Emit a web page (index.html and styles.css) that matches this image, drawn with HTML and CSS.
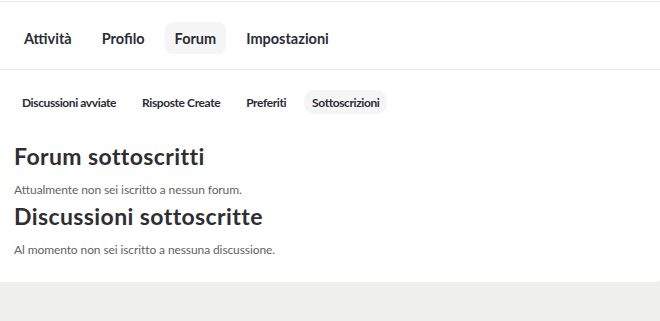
FILE: index.html
```html
<!DOCTYPE html>
<html lang="it">
  <head>
    <meta charset="utf-8">
    <link rel="stylesheet" href="styles.css">
    <title>Sottoscrizioni</title>
  </head>
  <body>
    <div class="card">
      <nav class="main-nav">
        <a href="#" class="nav-item">Attività</a>
        <a href="#" class="nav-item">Profilo</a>
        <a href="#" class="nav-item current">Forum</a>
        <a href="#" class="nav-item">Impostazioni</a>
      </nav>
      <nav class="sub-nav">
        <a href="#" class="sub-item">Discussioni avviate</a>
        <a href="#" class="sub-item">Risposte Create</a>
        <a href="#" class="sub-item">Preferiti</a>
        <a href="#" class="sub-item current">Sottoscrizioni</a>
      </nav>
      <div class="content">
        <h2>Forum sottoscritti</h2>
        <p>Attualmente non sei iscritto a nessun forum.</p>
        <h2>Discussioni sottoscritte</h2>
        <p>Al momento non sei iscritto a nessuna discussione.</p>
      </div>
    </div>
  </body>
</html>
```

FILE: styles.css
```css
body{
  margin: 0;
  background-color: #efefeb;
  font-family: Lato, 'Liberation Sans', sans-serif;
  color: #333333;
}
.card{
  background-color: #ffffff;
  padding-top: 1px;
  border-bottom-right-radius: 4px;
}
.main-nav{
  display: flex;
  gap: 10px;
  padding: 20px 14px 15px;
  border-top: 1px solid #e9e9e9;
  border-bottom: 1px solid #e9e9e9;
}
.nav-item{
  display: flex;
  align-items: center;
  height: 32px;
  padding: 0 10px;
  border-radius: 8px;
  font-size: 14.5px;
  font-weight: bold;
  color: #2b2d36;
  text-decoration: none;
}
.sub-nav{
  display: flex;
  gap: 10px;
  padding: 20px 14px 0;
}
.sub-item{
  display: flex;
  align-items: center;
  height: 24px;
  padding: 0 8px;
  border-radius: 10px;
  font-size: 12px;
  font-weight: bold;
  letter-spacing: -0.4px;
  color: #2b2d36;
  text-decoration: none;
}
.current{
  background-color: #f5f5f5;
}
.content{
  padding: 29px 14px 23px;
}
.content h2{
  margin: 0 0 12px;
  font-size: 23px;
  line-height: 26px;
  font-weight: bold;
  letter-spacing: 0.4px;
  color: #2e2e33;
}
.content p{
  margin: 0 0 4px;
  font-size: 12px;
  line-height: 18px;
  color: #636363;
  letter-spacing: -0.1px;
}
.content p:last-child{
  margin-bottom: 0;
}
```
